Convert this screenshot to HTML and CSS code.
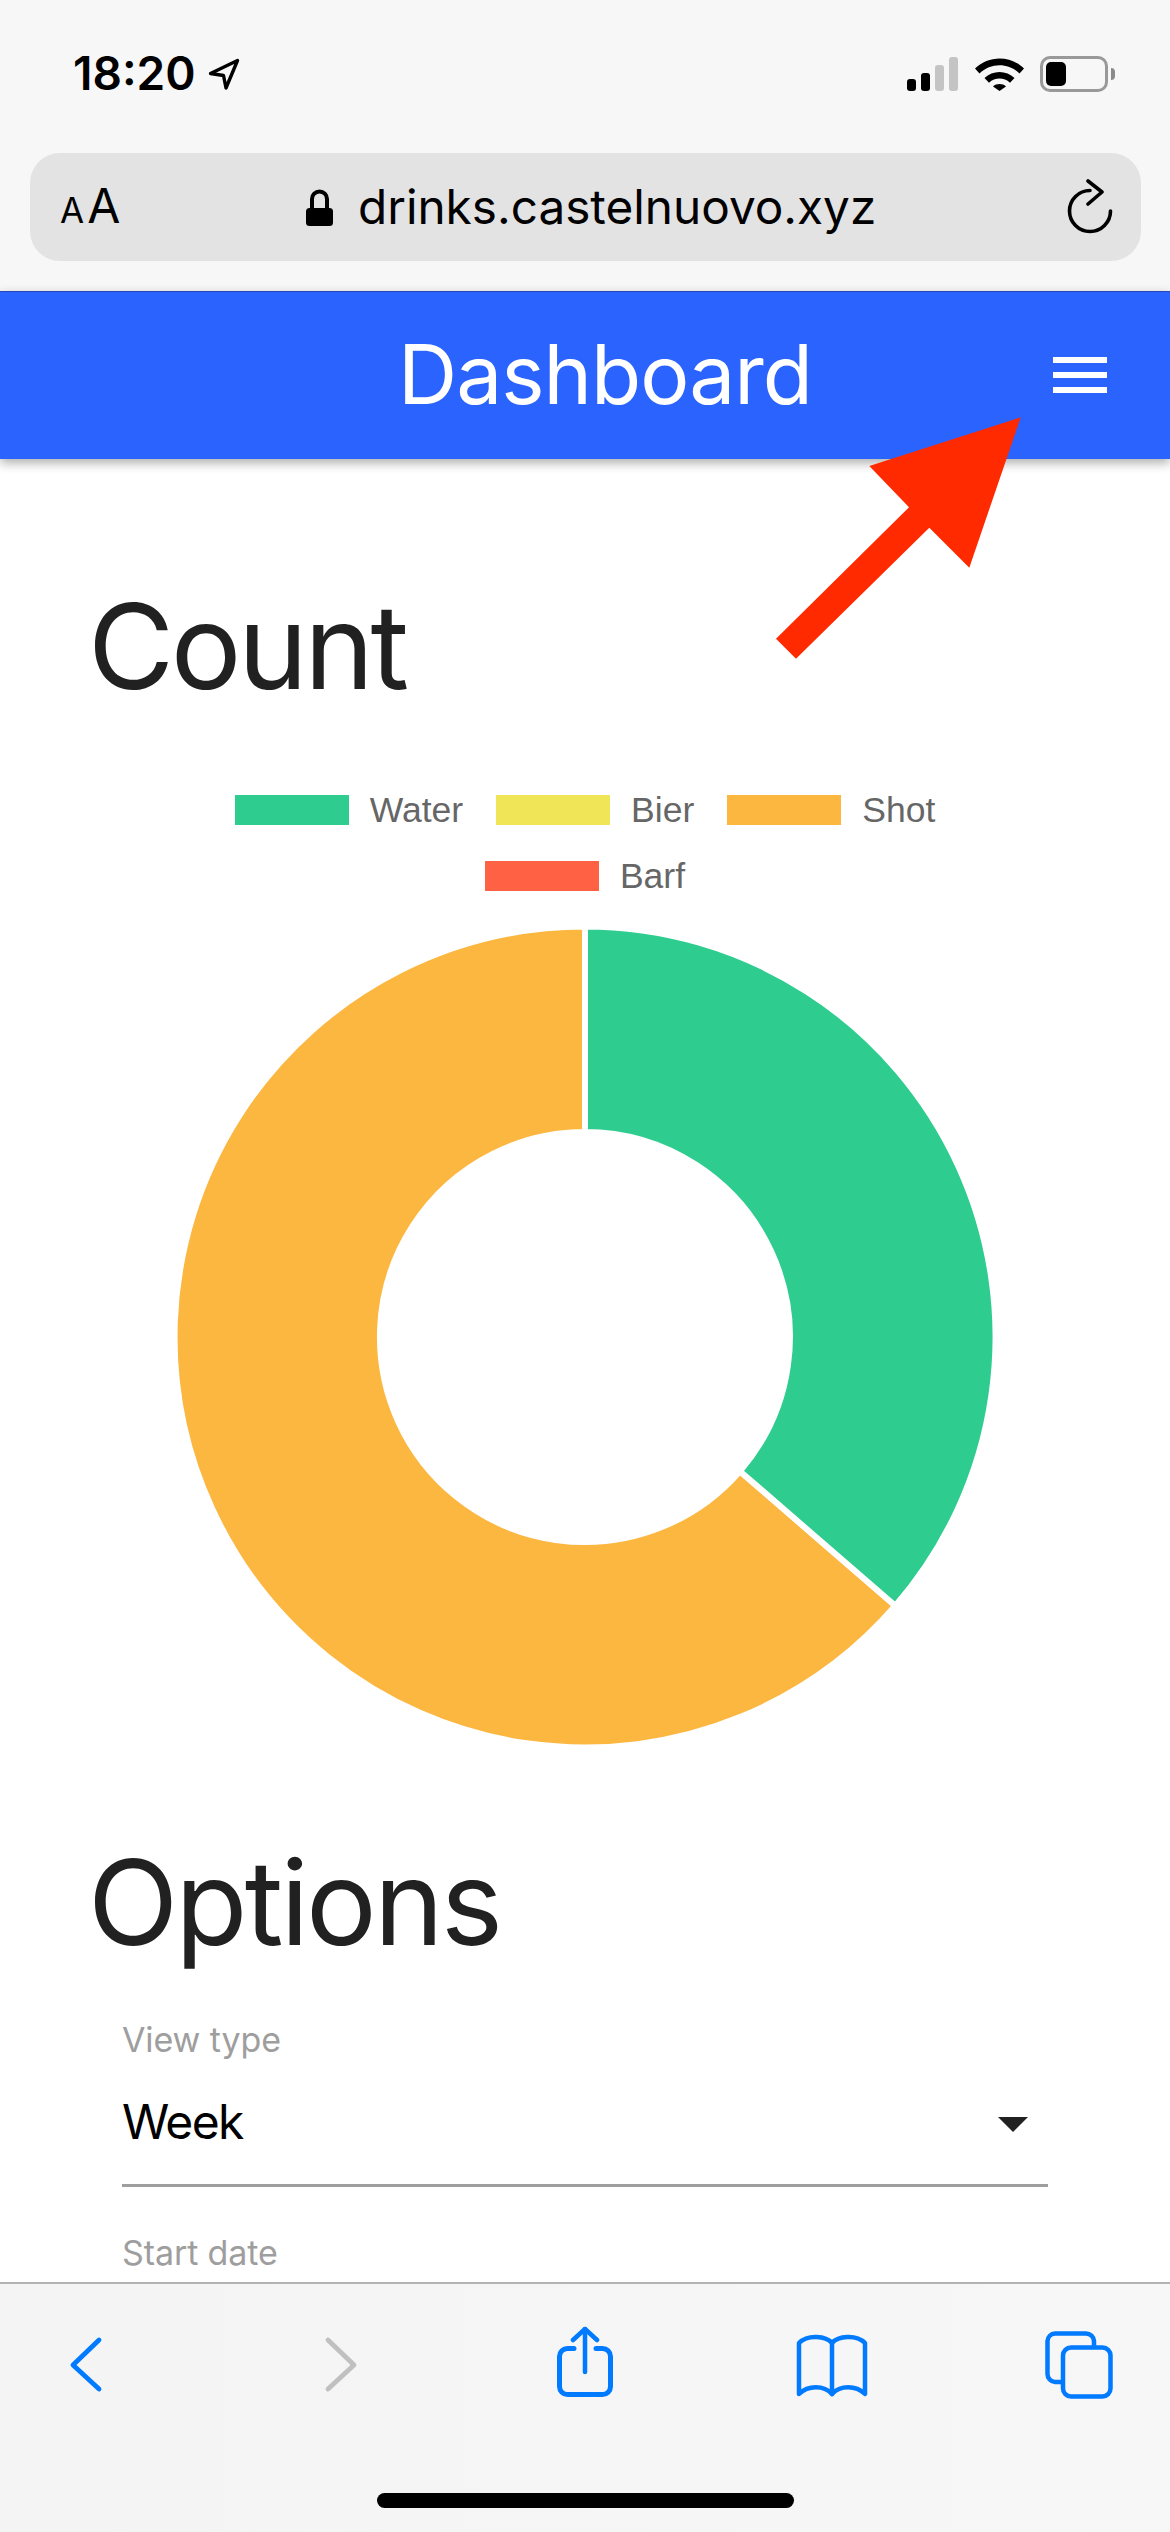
FILE: index.html
```html
<!DOCTYPE html>
<html lang="en">
<head>
<meta charset="utf-8">
<title>Dashboard</title>
<link rel="stylesheet" href="styles.css">
</head>
<body>
<div class="phone">
  <div class="chrome">
    <div class="status">
      <div class="clock">
        <span class="time">18:20</span>
        <svg class="loc" width="32" height="33" viewBox="0 0 32 33"><path d="M2.5 15.5 29.5 2.5 18 30 15.5 17.5Z" fill="none" stroke="#000" stroke-width="3.4" stroke-linejoin="round"/></svg>
      </div>
      <div class="indicators">
        <div class="signal">
          <span class="bar bar-1"></span><span class="bar bar-2"></span><span class="bar bar-3"></span><span class="bar bar-4"></span>
        </div>
        <svg class="wifi" width="49" height="36" viewBox="0 0 49 36"><path d="M0 13.5C13.5 0 35.500 0 49 13.500L44.500 18.500C33.500 7.500 15.500 7.500 4.500 18.500Z"/><path d="M9.500 23C17.500 15 31.500 15 39.500 23L35 27.800C29 22.200 20 22.200 14 27.800Z"/><path d="M18 31.500C21.500 28.300 27.500 28.300 31 31.500L24.500 36Z"/></svg>
        <div class="battery"><div class="battery-case"><span class="battery-level"></span></div><span class="battery-nub"></span></div>
      </div>
    </div>
    <div class="urlbar">
      <div class="aa"><span class="aa-small">A</span><span class="aa-big">A</span></div>
      <div class="address">
        <svg class="lock" width="27" height="39" viewBox="0 0 27 39"><path d="M6 22V12a7.500 7.500 0 0 1 15 0v10" fill="none" stroke="#000" stroke-width="4"/><rect x="0" y="21" width="27" height="18" rx="3.500"/></svg>
        <span class="url">drinks.castelnuovo.xyz</span>
      </div>
      <svg class="reload" width="48" height="56" viewBox="0 0 48 56"><path d="M24 11.500A20.500 20.500 0 1 0 44.500 32" fill="none" stroke="#000" stroke-width="3.600" stroke-linecap="round"/><path d="M22 2 36 13 22 25" fill="none" stroke="#000" stroke-width="3.600" stroke-linecap="round" stroke-linejoin="round"/></svg>
    </div>
  </div>

  <header class="appbar">
    <h2 class="appbar-title">Dashboard</h2>
    <div class="burger"><span></span><span></span><span></span></div>
  </header>

  <main class="content">
    <h1 class="heading heading-count">Count</h1>
    <ul class="legend">
      <li class="legend-item"><span class="swatch swatch-water"></span>Water</li>
      <li class="legend-item"><span class="swatch swatch-bier"></span>Bier</li>
      <li class="legend-item"><span class="swatch swatch-shot"></span>Shot</li>
      <li class="legend-item"><span class="swatch swatch-barf"></span>Barf</li>
    </ul>
    <svg class="donut" width="830" height="830" viewBox="0 0 830 830">
      <path class="slice-shot" d="M725.300 683.800A410.500 410.500 0 1 1 415 4.500L415 210A205 205 0 1 0 569.900 549.200Z"/>
      <path class="slice-water" d="M415 4.500A410.500 410.500 0 0 1 725.300 683.800L569.900 549.200A205 205 0 0 0 415 210Z"/>
    </svg>
    <h1 class="heading heading-options">Options</h1>
    <form class="fields">
      <label class="field-label">View type</label>
      <div class="select"><span>Week</span><span class="caret"></span></div>
      <label class="field-label">Start date</label>
    </form>
  </main>

  <footer class="toolbar">
    <div class="tools">
      <svg class="tool tool-back" width="36" height="60" viewBox="0 0 36 60"><path d="M31 4 5 29 31 53" fill="none" stroke="#007aff" stroke-width="4.800" stroke-linecap="round" stroke-linejoin="round"/></svg>
      <svg class="tool tool-forward" width="36" height="60" viewBox="0 0 36 60"><path d="M5 4 31 29 5 53" fill="none" stroke="#c0c0c0" stroke-width="4.800" stroke-linecap="round" stroke-linejoin="round"/></svg>
      <svg class="tool tool-share" width="62" height="76" viewBox="0 0 62 76"><g fill="none" stroke="#007aff" stroke-linecap="round" stroke-linejoin="round"><path stroke-width="4.500" d="M31 3V46"/><path stroke-width="4.500" d="M19 14 31 3 43 14"/><path stroke-width="5" d="M20 22.500H13.500A8 8 0 0 0 5.500 30.500V60.500A8 8 0 0 0 13.500 68.500H48.500A8 8 0 0 0 56.500 60.500V30.500A8 8 0 0 0 48.500 22.500H42"/></g></svg>
      <svg class="tool tool-book" width="72" height="64" viewBox="0 0 72 64"><g fill="none" stroke="#007aff" stroke-width="4.500" stroke-linecap="round" stroke-linejoin="round"><path d="M36 9V60"/><path d="M36 9C30 2 12 0 3 9V60C12 51 28 51 36 60C44 51 60 51 69 60V9C60 0 42 2 36 9Z"/></g></svg>
      <svg class="tool tool-tabs" width="68" height="68" viewBox="0 0 68 68"><g fill="none" stroke="#007aff" stroke-width="4.500"><path d="M17 51H10A8 8 0 0 1 2.500 43V10A8 8 0 0 1 10 2.500H41A8 8 0 0 1 49 10V16"/><rect x="18" y="16.500" width="47.500" height="49" rx="8"/></g></svg>
    </div>
    <div class="home"></div>
  </footer>

  <svg class="callout" width="260" height="250" viewBox="0 0 260 250"><polygon points="250.700,3.300 99.300,52 139,93.300 6,224.700 26,244.700 159.300,113.700 199.300,153.700"/></svg>
</div>
</body>
</html>
```
FILE: styles.css
```css
* { box-sizing: border-box; }
html, body { margin: 0; padding: 0; background: #fff; }
.phone {
  position: relative;
  width: 1170px;
  height: 2532px;
  overflow: hidden;
  display: flex;
  flex-direction: column;
  font-family: Inter, sans-serif;
}

/* browser chrome */
.chrome { height: 291px; background: #f7f7f7; padding: 55px 29px 0 30px; flex: none; }
.status { height: 98px; display: flex; justify-content: space-between; align-items: flex-start; }
.clock { display: flex; align-items: flex-start; margin-left: 43px; }
.time { font: 600 46px/37px Inter, sans-serif; color: #000; letter-spacing: 0; }
.loc { margin: 3px 0 0 12px; }
.indicators { display: flex; align-items: flex-start; margin-right: 26px; }
.signal { display: flex; align-items: flex-end; gap: 5px; height: 36px; }
.bar { width: 9px; background: #000; border-radius: 3px; }
.bar-1 { height: 12px; }
.bar-2 { height: 18px; }
.bar-3 { height: 26px; background: #c4c4c4; }
.bar-4 { height: 34px; background: #c4c4c4; }
.wifi { margin-left: 17px; }
.wifi path { fill: #000; }
.battery { display: flex; align-items: center; margin-left: 16px; margin-top: 1px; height: 36px; }
.battery-case { width: 68px; height: 36px; border: 3px solid #999; border-radius: 10px; padding: 3px; }
.battery-level { display: block; width: 20px; height: 24px; background: #000; border-radius: 5px; }
.battery-nub { width: 4px; height: 12px; margin-left: 3px; background: #8a8a8a; border-radius: 0 4px 4px 0; }

.urlbar {
  height: 108px;
  width: 1111px;
  background: #e3e3e3;
  border-radius: 30px;
  display: flex;
  align-items: flex-start;
  position: relative;
}
.aa { display: flex; align-items: baseline; margin: 28px 0 0 30px; font-family: Inter, sans-serif; color: #000; width: 61px; line-height: 50px; }
.aa-small { font-size: 35px; }
.aa-big { font-size: 48px; margin-left: 3px; }
.address { display: flex; align-items: flex-start; margin: 34px 0 0 185px; }
.lock { flex: none; }
.url { font: 400 47.700px/52px Inter, sans-serif; color: #000; margin: -6px 0 0 25px; white-space: nowrap; }
.reload { margin: 26px 27px 0 auto; }

/* app bar */
.appbar {
  position: relative;
  z-index: 1;
  flex: none;
  height: 168px;
  background: #2b63ff;
  border-top: 1px solid #2347b4;
  box-shadow: 0 4px 10px rgba(0, 0, 0, .32);
  display: flex;
  align-items: flex-start;
}
.appbar-title { margin: 34px 0 0 398px; font: 400 82px/98px Inter, sans-serif; color: #fff; letter-spacing: -1px; }
.burger { margin: 65px 63px 0 auto; width: 54px; display: flex; flex-direction: column; gap: 9px; }
.burger span { height: 6px; background: #fff; }

/* content */
.content { flex: 1; min-height: 0; overflow: hidden; background: #fff; padding: 0 92px; }
.heading { margin: 0 0 0 -4px; font: 400 118px/140px Inter, sans-serif; color: #212121; letter-spacing: -3.500px; }
.heading-count { margin-top: 117px; }
.heading-options { margin-top: 80px; letter-spacing: -2.900px; }

.legend { list-style: none; width: 800px; margin: 61px auto 0; padding: 0; display: flex; flex-wrap: wrap; justify-content: center; column-gap: 33px; row-gap: 0; font: 400 35.500px/66px "Liberation Sans", Arial, sans-serif; color: #666; }
.legend-item { display: flex; align-items: center; }
.swatch { width: 114px; height: 30px; margin-right: 21px; }
.swatch-water { background: #2ecc8f; }
.swatch-bier { background: #efe556; }
.swatch-shot { background: #fcb741; }
.swatch-barf { background: #ff6145; }

.donut { display: block; margin: 13px 0 0 78px; }
.slice-water { fill: #2ecc8f; stroke: #fff; stroke-width: 6; }
.slice-shot { fill: #fcb741; stroke: #fff; stroke-width: 6; }

.fields { margin: 48px 30px 0; display: flex; flex-direction: column; }
.field-label { font: 400 34px/40px Inter, sans-serif; color: #9e9e9e; letter-spacing: -.1px; }
.select { height: 127px; margin-bottom: 46px; border-bottom: 3px solid #9e9e9e; display: flex; justify-content: space-between; align-items: center; font: 400 48px/56px Inter, sans-serif; letter-spacing: -1.600px; color: #000; padding-right: 20px; }
.caret { width: 0; height: 0; margin-top: 4px; border-left: 15px solid transparent; border-right: 15px solid transparent; border-top: 15px solid #212121; }

/* bottom toolbar */
.toolbar { flex: none; height: 250px; position: relative; border-top: 2px solid #b3b3b3; background: linear-gradient(90deg, #f4f4f4, #f7f7f7); }
.tools { position: relative; height: 200px; }
.tool { position: absolute; }
.tool-back { left: 68px; top: 52px; }
.tool-forward { left: 323px; top: 52px; }
.tool-share { left: 554px; top: 42px; }
.tool-book { left: 796px; top: 50px; }
.tool-tabs { left: 1045px; top: 47px; }
.home { position: absolute; left: 377px; top: 209px; width: 417px; height: 15px; background: #000; border-radius: 8px; }

/* annotation arrow over the page */
.callout { position: absolute; left: 770px; top: 414px; z-index: 2; }
.callout polygon { fill: #ff2a00; }
```
